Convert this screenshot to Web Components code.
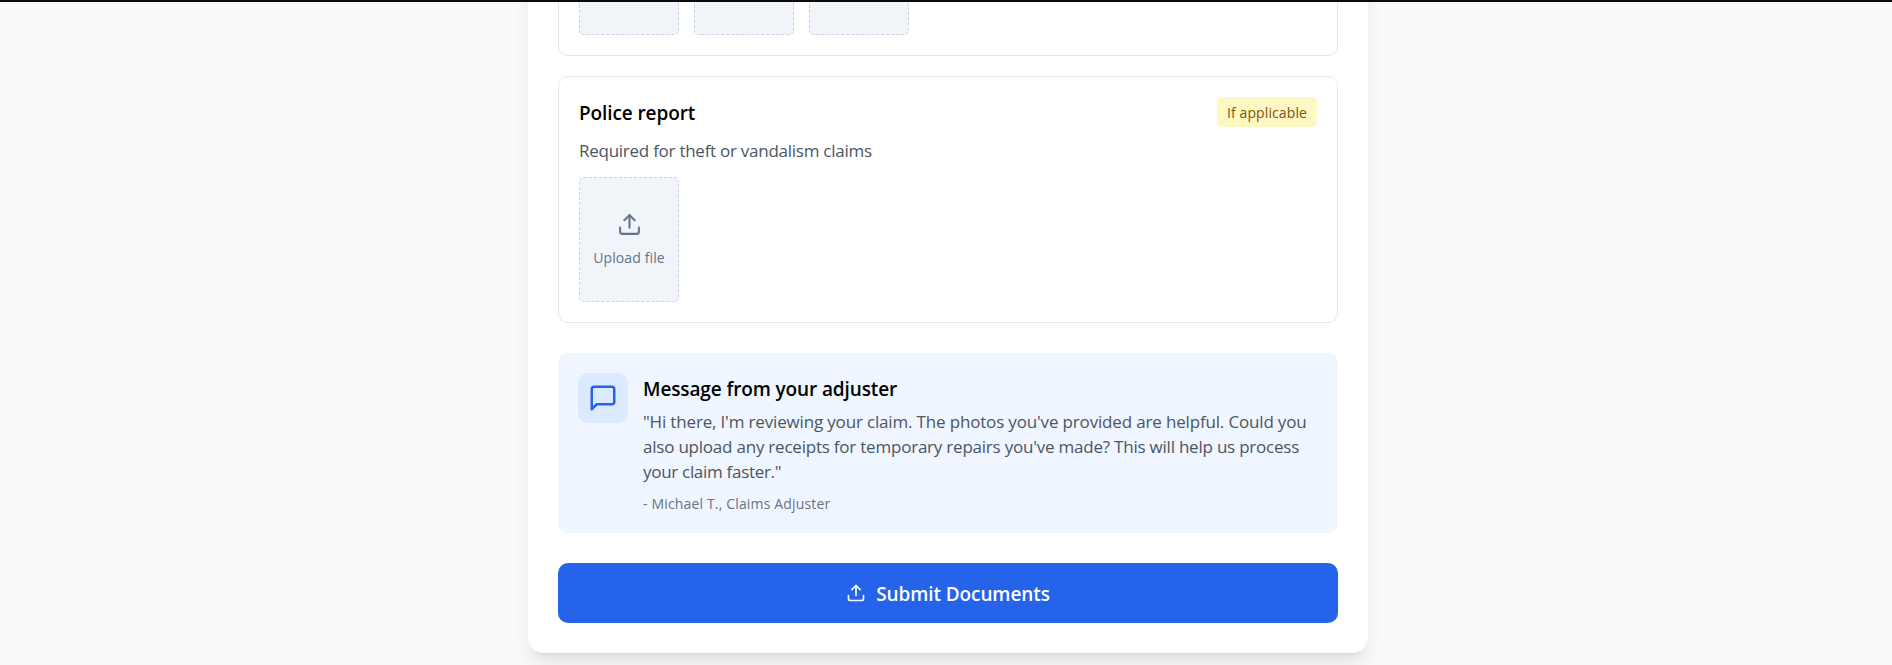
<!DOCTYPE html>
<html lang="en"><head><meta charset="utf-8"><title>Claim documents</title>
<style>html,body{margin:0;height:100%;overflow:hidden}body{background:#f9fafb;font-family:"Open Sans","Noto Sans",sans-serif}
.l1{letter-spacing:-.165px}.l2{letter-spacing:-.22px}.l3{letter-spacing:-.3px}</style></head>
<body>
<claim-page>
  <document-card>
    <upload-tile></upload-tile><upload-tile></upload-tile><upload-tile></upload-tile>
  </document-card>
  <document-card>
    <span slot="title">Police report</span>
    <status-badge slot="badge">If applicable</status-badge>
    <span slot="description">Required for theft or vandalism claims</span>
    <upload-tile><ui-icon name="upload" size="25"></ui-icon><span>Upload file</span></upload-tile>
  </document-card>
  <adjuster-message>
    <span slot="title">Message from your adjuster</span>
    <span class="l1">"Hi there, I'm reviewing your claim. The photos you've provided are helpful. Could you</span>
    <span class="l2">also upload any receipts for temporary repairs you've made? This will help us process</span>
    <span class="l3">your claim faster."</span>
    <span slot="author">- Michael T., Claims Adjuster</span>
  </adjuster-message>
  <submit-button>Submit Documents</submit-button>
</claim-page>
<script>
const define=(name,html,init)=>customElements.define(name,class extends HTMLElement{
  constructor(){super();this.attachShadow({mode:'open'}).innerHTML=html;}
  connectedCallback(){if(init)init(this);}
});
const shapes={
  upload:'<path d="M21 15v4a2 2 0 0 1-2 2H5a2 2 0 0 1-2-2v-4"/><path d="m17 8-5-5-5 5"/><path d="M12 3v12"/>',
  message:'<path d="M21 15a2 2 0 0 1-2 2H7l-4 4V5a2 2 0 0 1 2-2h14a2 2 0 0 1 2 2z"/>'
};
define('ui-icon','<style>:host{display:block;flex:none}svg{display:block}</style><div></div>',el=>{
  const s=el.getAttribute('size');
  el.shadowRoot.querySelector('div').innerHTML=`<svg width="${s}" height="${s}" viewBox="0 0 24 24" fill="none" stroke="currentColor" stroke-width="2" stroke-linecap="round" stroke-linejoin="round">${shapes[el.getAttribute('name')]}</svg>`;
});
define('claim-page',`<style>
:host{display:flex;flex-direction:column;justify-content:flex-end;align-items:center;height:100vh;box-sizing:border-box;padding:0 0 12px 4px;overflow:hidden;position:relative}
main{width:840px;flex:none;box-sizing:border-box;padding:30px;background:#fff;border-radius:15px;box-shadow:0 12.5px 18.75px -3.75px rgb(0 0 0/.1),0 5px 7.5px -5px rgb(0 0 0/.1);display:flex;flex-direction:column;gap:30px}
::slotted(document-card:first-child){margin-bottom:-10px}
.edge{position:absolute;top:0;left:0;right:0;height:2px;background:#0c0a0b}
</style><main><slot></slot></main><div class="edge"></div>`);
define('document-card',`<style>
:host{display:block;box-sizing:border-box;height:247px;border:1px solid #e5e7eb;border-radius:10px;padding:20px}
header{display:flex;justify-content:space-between;align-items:center;height:30px}
h3{margin:0;padding-top:2px;font-size:19px;line-height:30px;font-weight:600;color:#000;letter-spacing:-.1px}
p{margin:10px 0 15px;height:25px;font-size:17px;line-height:27px;color:#4b5563;letter-spacing:-.26px}
.files{display:flex;gap:15px}
</style><header><h3><slot name="title"></slot></h3><slot name="badge"></slot></header><p><slot name="description"></slot></p><div class="files"><slot></slot></div>`);
define('status-badge',`<style>:host{display:flex;align-items:center;justify-content:center;box-sizing:border-box;width:100px;height:30px;padding-top:1px;border-radius:5px;background:#fef9c3;color:#854d0e;font-size:14px;line-height:20px;letter-spacing:.1px;white-space:nowrap}</style><slot></slot>`);
define('upload-tile',`<style>:host{display:flex;flex-direction:column;align-items:center;justify-content:center;gap:10px;box-sizing:border-box;width:100px;height:125px;border:1px dashed #cbd5e1;border-radius:5px;background:#f1f5f9;color:#64748b;font-size:14px;line-height:20px;letter-spacing:.12px;white-space:nowrap}::slotted(span){margin:1px 0 -1px}</style><slot></slot>`);
define('adjuster-message',`<style>
:host{display:flex;gap:15px;box-sizing:border-box;height:180px;padding:20px;border-radius:10px;background:#eff6ff}
.icon{flex:none;display:grid;place-items:center;width:50px;height:50px;border-radius:10px;background:#dbeafe;color:#2563eb}
h3{margin:0 0 5px;padding-top:1px;font-size:19px;line-height:30px;font-weight:600;letter-spacing:-.12px;color:#000}
p{margin:0;font-size:17px;line-height:25px;color:#4b5563}
p slot::slotted(span){display:block;white-space:nowrap;width:max-content}
small{display:block;margin-top:10px;font-size:14px;line-height:20px;letter-spacing:.16px;color:#6b7280}
</style><div class="icon"><ui-icon name="message" size="30"></ui-icon></div><div><h3><slot name="title"></slot></h3><p><slot></slot></p><small><slot name="author"></slot></small></div>`);
define('submit-button',`<style>
:host{display:block}
button{display:flex;align-items:center;justify-content:center;gap:10px;width:100%;height:60px;padding:0;border:0;border-radius:10px;background:#2563eb;color:#fff;font:600 19px/30px "Open Sans",sans-serif;letter-spacing:-.1px}
span{padding-top:2px}
</style><button><ui-icon name="upload" size="20"></ui-icon><span><slot></slot></span></button>`);
</script>
</body></html>
